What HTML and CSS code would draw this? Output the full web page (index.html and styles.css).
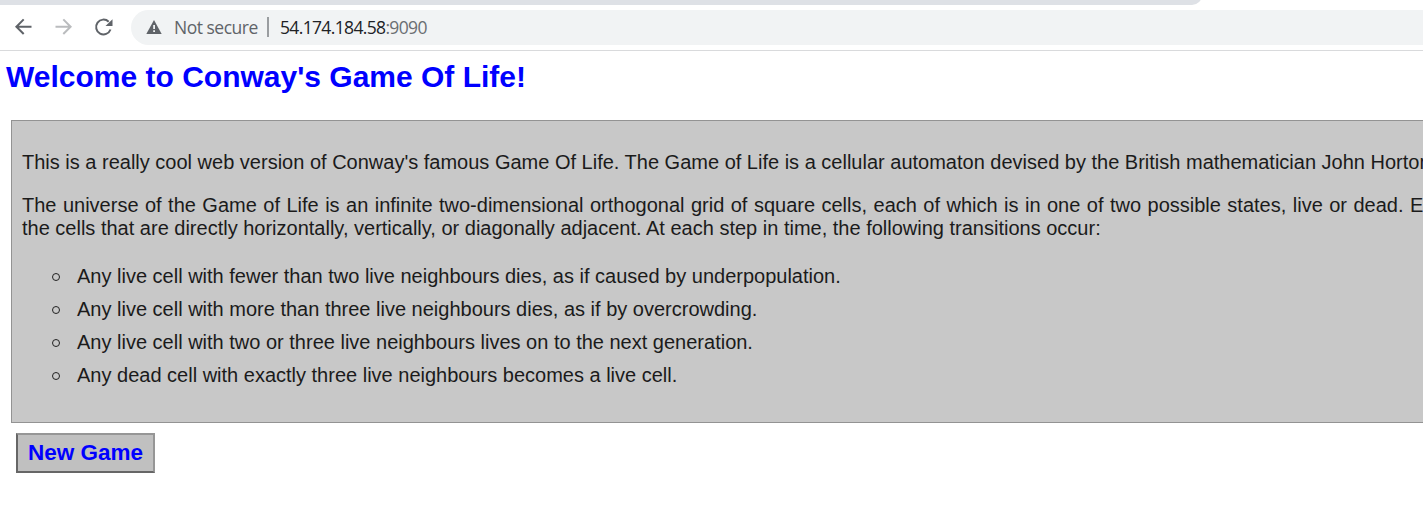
FILE: index.html
```html
<!DOCTYPE html>
<html lang="en">
<head>
<meta charset="utf-8">
<title>Conway's Game Of Life</title>
<link rel="stylesheet" href="styles.css">
</head>
<body>
<div class="tabstrip"><div class="tabstrip-fill"></div></div>
<header class="toolbar">
  <svg class="nav" width="20" height="20" viewBox="0 0 20 20" fill="none" stroke="#5f6368" stroke-width="2"><path d="M18.500 9.700H3.500M10.700 2.400L3.400 9.700L10.700 17"/></svg>
  <svg class="nav" width="20" height="20" viewBox="0 0 20 20" fill="none" stroke="#babcbe" stroke-width="2"><path d="M2.500 9.700H17.500M10.300 2.400L17.600 9.700L10.300 17"/></svg>
  <svg class="nav" width="20" height="20" viewBox="0 0 20 20"><path d="M15.700 4.700A7.400 7.400 0 1 0 17.500 12.500" fill="none" stroke="#5f6368" stroke-width="2"/><path d="M19.500 2.300V9H12.500Z" fill="#5f6368"/></svg>
  <div class="omnibox">
    <svg class="warn" width="16" height="14" viewBox="0 0 16 14"><path d="M8 0L15.700 14H0.300Z" fill="#5f6368"/><path d="M7.200 5h1.800v4H7.200zM7.200 10.200h1.800v1.700H7.200z" fill="#f1f3f4"/></svg>
    <span class="insecure">Not secure</span>
    <span class="separator"></span>
    <span class="url">54.174.184.58<span class="port">:9090</span></span>
  </div>
</header>
<main>
  <h1>Welcome to Conway's Game Of Life!</h1>
  <section class="intro">
    <p>This is a really cool web version of Conway's famous Game Of Life. The Game of Life is a cellular automaton devised by the British mathematician John Horton</p>
    <p><span class="spread">The universe of the Game of Life is an infinite two-dimensional orthogonal grid of square cells, each of which is in one of two possible states, live or dead. E</span><br>the cells that are directly horizontally, vertically, or diagonally adjacent. At each step in time, the following transitions occur:</p>
    <ul>
      <li>Any live cell with fewer than two live neighbours dies, as if caused by underpopulation.</li>
      <li>Any live cell with more than three live neighbours dies, as if by overcrowding.</li>
      <li>Any live cell with two or three live neighbours lives on to the next generation.</li>
      <li>Any dead cell with exactly three live neighbours becomes a live cell.</li>
    </ul>
  </section>
  <button class="new-game" type="button">New Game</button>
</main>
</body>
</html>
```

FILE: styles.css
```css
*, *::before { box-sizing: border-box; }
body {
  margin: 0;
  height: 530px;
  overflow: hidden;
  background: #fff;
  font-family: "Liberation Sans", Arial, sans-serif;
}
.tabstrip { height: 5px; overflow: hidden; }
.tabstrip-fill {
  width: 1202px;
  height: 15px;
  margin-top: -10px;
  background: #dee1e6;
  border-bottom-right-radius: 10px;
}
.toolbar {
  display: flex;
  align-items: center;
  height: 46px;
  padding: 0 0 1px 13px;
  border-bottom: 1px solid #d9dadc;
}
.nav { flex: none; margin-right: 20px; }
.omnibox {
  display: flex;
  align-items: center;
  flex: 1;
  height: 35px;
  margin-left: -2px;
  padding-left: 15px;
  background: #f1f3f4;
  border-radius: 18px 0 0 18px;
  font: 17.5px/24px "Open Sans", "Noto Sans", sans-serif;
  white-space: nowrap;
}
.warn { flex: none; margin-right: 12px; }
.insecure { width: 84px; color: #5f6368; letter-spacing: -.5px; }
.separator { width: 2px; height: 20px; margin: 0 11px 0 9px; background: #9a9da0; }
.url { color: #202124; letter-spacing: -.65px; }
.port { color: #6a6e72; }
h1 {
  margin: 0;
  padding: 8px 0 0 6px;
  height: 69px;
  color: #00f;
  font-size: 30px;
  line-height: 36px;
  white-space: nowrap;
}
.intro {
  height: 303px;
  margin: 0 -10px 0 11px;
  padding: 30px 0 0 10px;
  border: 1px solid #939393;
  background: #c8c8c8;
  color: #1b1b1b;
  font-size: 20px;
  line-height: 23px;
  white-space: nowrap;
  overflow: hidden;
}
.intro p { margin: 0 0 20px; }
.spread { word-spacing: .9px; }
.intro ul { margin: 0; padding: 5px 0 0 29px; list-style: none; }
.intro li { display: flex; height: 33px; }
.intro li::before {
  content: "";
  width: 8px;
  height: 8px;
  margin: 8px 17px 0 1px;
  border: 1.5px solid #222;
  border-radius: 50%;
}
.new-game {
  display: block;
  width: 139px;
  height: 40px;
  margin: 10px 0 0 16px;
  padding: 0;
  border: 2px solid;
  border-color: #969696 #969696 #666 #666;
  background: #c0c0c0;
  color: #00f;
  font: bold 22.5px/34px "Liberation Sans", Arial, sans-serif;
  white-space: nowrap;
}
```
